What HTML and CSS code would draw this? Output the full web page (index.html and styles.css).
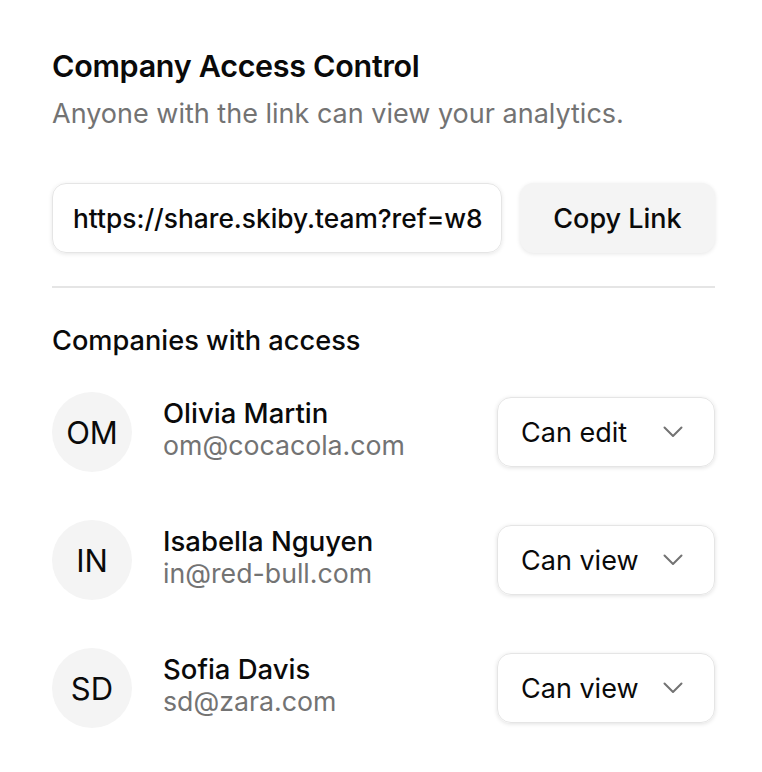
FILE: index.html
```html
<!DOCTYPE html>
<html>
<head>
<meta charset="utf-8">
<link rel="stylesheet" href="styles.css">
</head>
<body>
<div class="card">
  <div class="header">
    <h1 class="title">Company Access Control</h1>
    <p class="subtitle">Anyone with the link can view your analytics.</p>
  </div>
  <div class="share">
    <div class="link-input">https://share.skiby.team?ref=w8</div>
    <button class="copy-btn">Copy Link</button>
  </div>
  <hr class="divider">
  <h2 class="section-title">Companies with access</h2>
  <div class="list">
    <div class="row">
      <div class="avatar">OM</div>
      <div class="info">
        <div class="name">Olivia Martin</div>
        <div class="email">om@cocacola.com</div>
      </div>
      <div class="select"><span>Can edit</span><svg class="chev" viewBox="0 0 20 12" width="20" height="12"><path d="M1.5 1.5l8.5 8.5 8.5-8.5"/></svg></div>
    </div>
    <div class="row">
      <div class="avatar">IN</div>
      <div class="info">
        <div class="name">Isabella Nguyen</div>
        <div class="email">in@red-bull.com</div>
      </div>
      <div class="select"><span>Can view</span><svg class="chev" viewBox="0 0 20 12" width="20" height="12"><path d="M1.5 1.5l8.5 8.5 8.5-8.5"/></svg></div>
    </div>
    <div class="row">
      <div class="avatar">SD</div>
      <div class="info">
        <div class="name">Sofia Davis</div>
        <div class="email">sd@zara.com</div>
      </div>
      <div class="select"><span>Can view</span><svg class="chev" viewBox="0 0 20 12" width="20" height="12"><path d="M1.5 1.5l8.5 8.5 8.5-8.5"/></svg></div>
    </div>
  </div>
</div>
</body>
</html>
```

FILE: styles.css
```css
* { box-sizing: border-box; }
html, body { margin: 0; padding: 0; background: #ffffff; }
body {
  font-family: Inter, "Liberation Sans", sans-serif;
  color: #0a0a0a;
}
.card {
  width: 762px;
  padding: 46px 47px 0 52px;
}
.title {
  margin: 0;
  font-size: 30.5px;
  line-height: 40px;
  font-weight: 600;
  letter-spacing: -0.3px;
}
.subtitle {
  margin: 10px 0 0;
  font-size: 27px;
  line-height: 36px;
  color: #737373;
  font-weight: 400;
}
.share {
  display: flex;
  gap: 18px;
  margin-top: 51px;
}
.link-input {
  flex: 1;
  height: 70px;
  border: 1.5px solid #e5e5e5;
  border-radius: 14px;
  display: flex;
  align-items: center;
  padding: 0 20px;
  font-size: 26.3px;
  font-weight: 500;
  box-shadow: 0 1px 4px rgba(0,0,0,0.1);
  white-space: nowrap;
  overflow: hidden;
}
.copy-btn {
  width: 195px;
  height: 70px;
  border: none;
  border-radius: 14px;
  background: #f4f4f4;
  font-family: inherit;
  font-size: 27px;
  font-weight: 500;
  color: #0a0a0a;
  box-shadow: 0 1px 4px rgba(0,0,0,0.1);
}
.divider {
  margin: 33px 0 0;
  border: none;
  border-top: 2px solid #e5e5e5;
}
.section-title {
  margin: 35px 0 0;
  font-size: 27.2px;
  line-height: 36px;
  font-weight: 500;
}
.list {
  display: flex;
  flex-direction: column;
  gap: 48px;
  margin-top: 33px;
}
.row {
  display: flex;
  align-items: center;
  height: 80px;
}
.avatar {
  width: 80px;
  height: 80px;
  border-radius: 50%;
  background: #f4f4f4;
  display: flex;
  align-items: center;
  justify-content: center;
  font-size: 31px;
  font-weight: 400;
  flex-shrink: 0;
}
.info {
  margin-left: 31px;
  padding-bottom: 6px;
  flex: 1;
}
.name {
  font-size: 27.5px;
  line-height: 32px;
  font-weight: 500;
}
.email {
  font-size: 26.7px;
  line-height: 32px;
  color: #737373;
}
.select {
  width: 218px;
  height: 70px;
  border: 1.5px solid #e5e5e5;
  border-radius: 14px;
  box-shadow: 0 1px 4px rgba(0,0,0,0.12);
  display: flex;
  align-items: center;
  justify-content: space-between;
  padding: 0 31px 0 23px;
  font-size: 27px;
}
.chev {
  width: 20px;
  height: 12px;
  fill: none;
  stroke: #737373;
  stroke-width: 2;
  stroke-linecap: round;
  stroke-linejoin: round;
}
```
